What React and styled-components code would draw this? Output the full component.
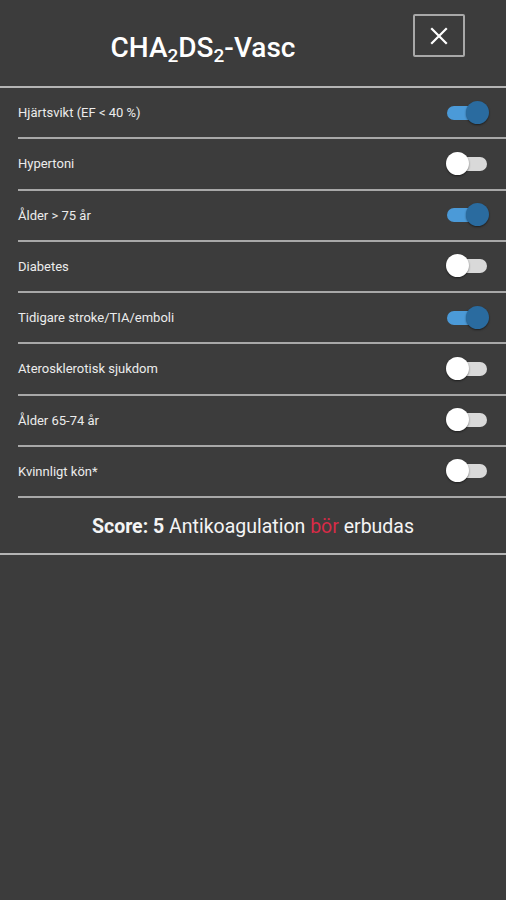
import React, { useState } from 'react';
import styled, { createGlobalStyle } from 'styled-components';

const Global = createGlobalStyle`
  html, body {
    margin: 0;
    padding: 0;
    background: #3c3c3c;
  }
  body {
    font-family: Roboto, "Noto Sans", "Liberation Sans", sans-serif;
    color: #f2f2f2;
  }
`;

const Page = styled.div`
  width: 506px;
  min-height: 900px;
  background: #3c3c3c;
`;

const Header = styled.div`
  height: 86px;
  display: flex;
  align-items: center;
  position: relative;
  border-bottom: 2px solid #b4b4b4;
`;

const Title = styled.h1`
  margin: 0;
  width: 406px;
  text-align: center;
  font-size: 28px;
  font-weight: 500;
  color: #ffffff;
  padding-top: 8px;

  sub {
    font-size: 19px;
    vertical-align: -5px;
    line-height: 0;
  }
`;

const CloseButton = styled.button`
  position: absolute;
  left: 413px;
  top: 14px;
  width: 52px;
  height: 43px;
  box-sizing: border-box;
  border: 2px solid #a8a8a8;
  border-radius: 2px;
  background: transparent;
  display: flex;
  align-items: center;
  justify-content: center;
  padding: 0;
  cursor: pointer;
`;

const List = styled.div`
  padding-left: 18px;
`;

const Row = styled.div`
  height: 49.25px;
  display: flex;
  align-items: center;
  justify-content: space-between;
  border-bottom: 2px solid #a8a8a8;
`;

const Label = styled.span`
  font-size: 13px;
  color: #ececec;
`;

const Switch = styled.div`
  position: relative;
  width: 44px;
  height: 24px;
  margin-right: 16px;
  cursor: pointer;
`;

const Track = styled.div`
  position: absolute;
  left: 1px;
  right: 3px;
  top: 5px;
  height: 14px;
  border-radius: 7px;
  background: ${p => (p.$on ? '#4b9ad8' : '#d9d9d9')};
`;

const Thumb = styled.div`
  position: absolute;
  top: 0;
  left: ${p => (p.$on ? '20px' : '0')};
  width: 23px;
  height: 23px;
  border-radius: 50%;
  background: ${p => (p.$on ? '#2a6b9f' : '#ffffff')};
  box-shadow: 0 1px 2px rgba(0, 0, 0, 0.5);
`;

const Score = styled.div`
  height: 53px;
  display: flex;
  align-items: center;
  justify-content: center;
  white-space: pre;
  font-size: 19.5px;
  color: #f4f4f4;
  border-bottom: 2px solid #b4b4b4;
  padding-top: 2px;

  b {
    font-weight: 700;
  }
`;

const Red = styled.span`
  color: #d62b47;
`;

const items = [
  ['Hjärtsvikt (EF < 40 %)', true],
  ['Hypertoni', false],
  ['Ålder > 75 år', true],
  ['Diabetes', false],
  ['Tidigare stroke/TIA/emboli', true],
  ['Aterosklerotisk sjukdom', false],
  ['Ålder 65-74 år', false],
  ['Kvinnligt kön*', false],
];

function Toggle({ on, onClick }) {
  return (
    <Switch onClick={onClick}>
      <Track $on={on} />
      <Thumb $on={on} />
    </Switch>
  );
}

export default function App() {
  const [vals, setVals] = useState(items.map(i => i[1]));
  const points = [1, 1, 2, 1, 2, 1, 1, 1];
  const score = vals.reduce((s, v, i) => s + (v ? points[i] : 0), 0);

  return (
    <Page>
      <Global />
      <Header>
        <Title>
          CHA<sub>2</sub>DS<sub>2</sub>-Vasc
        </Title>
        <CloseButton aria-label="Stäng">
          <svg width="18" height="18" viewBox="0 0 18 18">
            <path d="M2 2 L16 16 M16 2 L2 16" stroke="#ffffff" strokeWidth="2.2" strokeLinecap="square" />
          </svg>
        </CloseButton>
      </Header>
      <List>
        {items.map(([label], i) => (
          <Row key={label}>
            <Label>{label}</Label>
            <Toggle
              on={vals[i]}
              onClick={() => setVals(v => v.map((x, j) => (j === i ? !x : x)))}
            />
          </Row>
        ))}
      </List>
      <Score>
        <b>Score: {score}</b> Antikoagulation <Red>bör</Red> erbudas
      </Score>
    </Page>
  );
}
